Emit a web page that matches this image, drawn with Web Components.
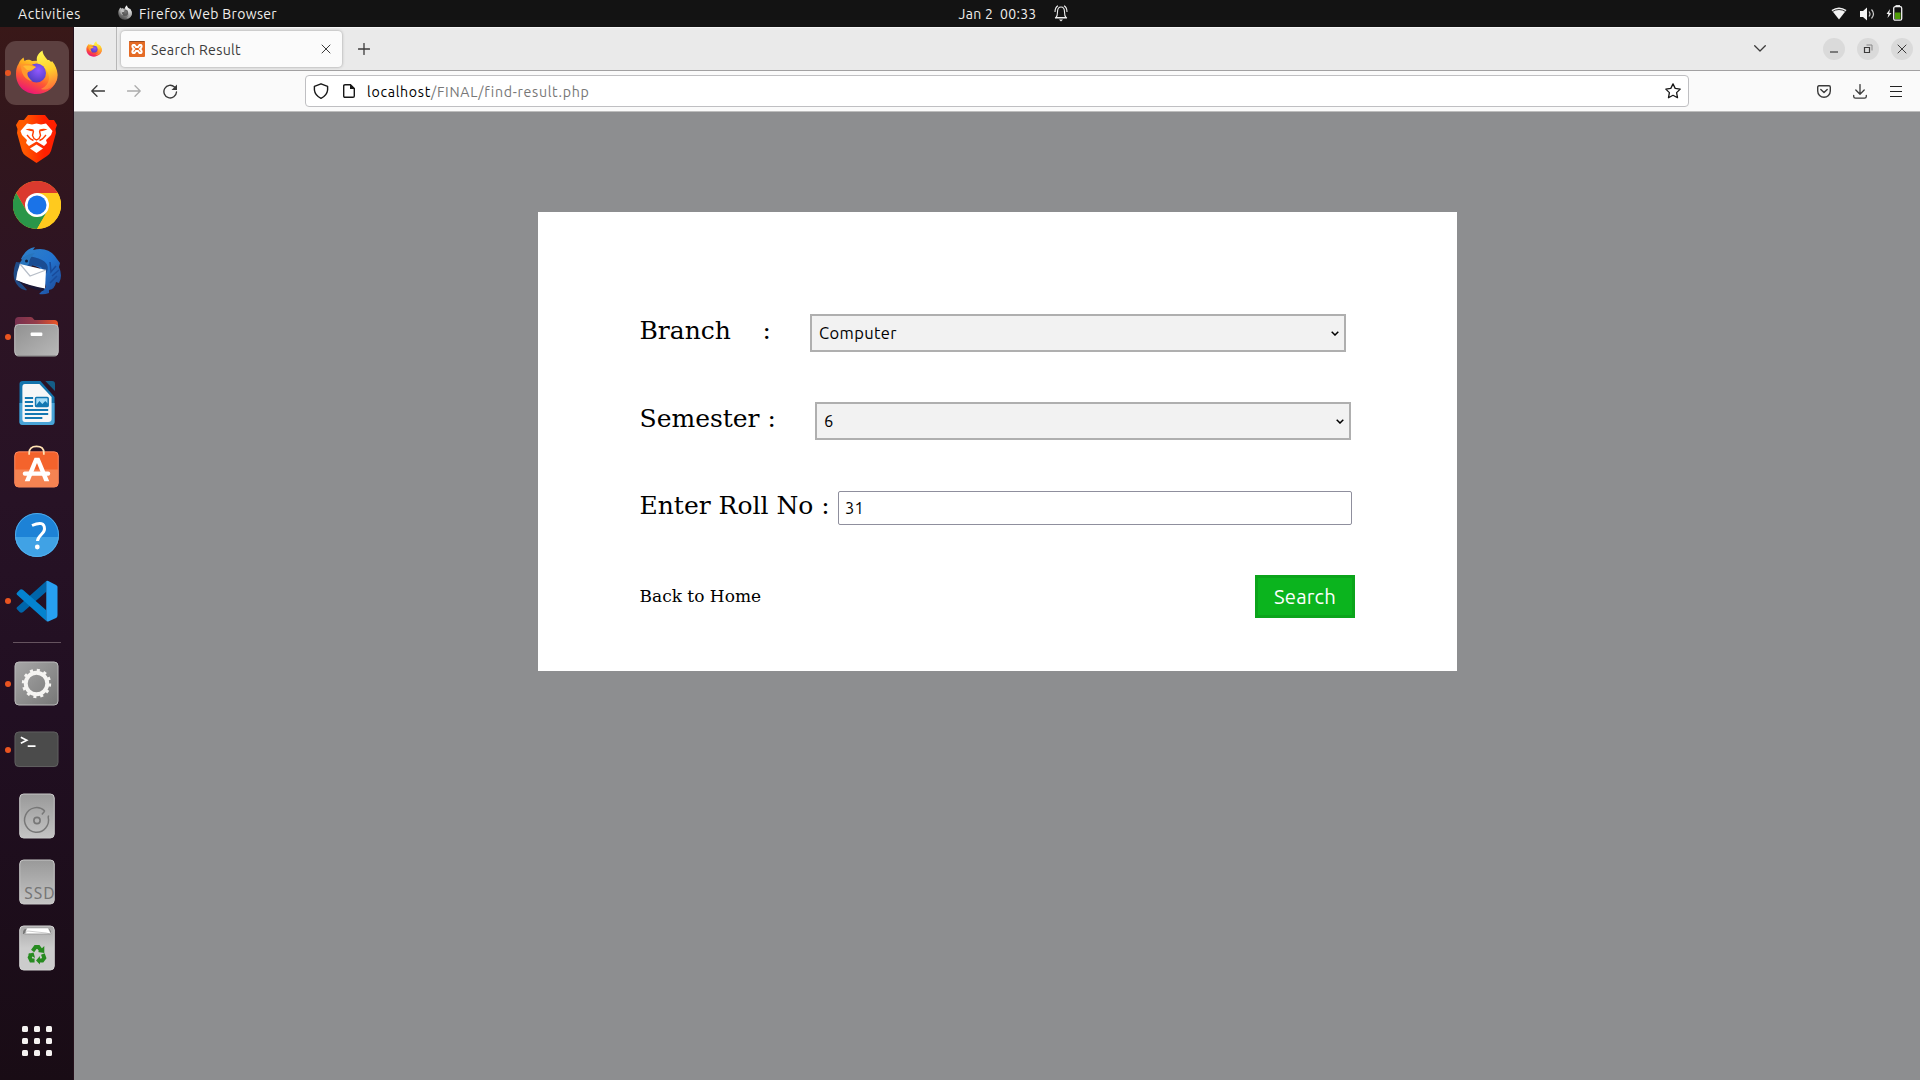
<!DOCTYPE html>
<html lang="en">
<head>
<meta charset="utf-8">
<title>Search Result</title>
<style>
html,body{margin:0;height:100%;overflow:hidden}
body{font-family:Ubuntu,"Noto Sans",sans-serif}
</style>
</head>
<body>
<desktop-shell></desktop-shell>
<script>
const define=(name,html,setup)=>customElements.define(name,class extends HTMLElement{
  connectedCallback(){
    if(this.shadowRoot)return;
    const root=this.attachShadow({mode:'open'});
    root.innerHTML=typeof html==='function'?html(this):html;
    if(setup)setup(this,root);
  }
});

/* A single line of text whose tracking is adjusted to fill the given width. */
define('fit-text','<style>:host{display:block;flex:none;white-space:pre;line-height:20px}span{display:inline-block}</style><span><slot></slot></span>',(el,root)=>{
  const w=+el.getAttribute('width'),s=root.querySelector('span'),n=el.textContent.length;
  el.style.width=w+'px';
  s.style.letterSpacing=((w-s.getBoundingClientRect().width)/n).toFixed(3)+'px';
});

const line='fill="none" stroke="currentColor" stroke-linecap="round" stroke-linejoin="round"';
const fox=`<defs><linearGradient id="b" x1=".8" y1="0" x2=".3" y2="1"><stop offset="0" stop-color="#fff24a"/><stop offset=".35" stop-color="#ffb01f"/><stop offset=".65" stop-color="#ff5634"/><stop offset="1" stop-color="#e8107c"/></linearGradient><linearGradient id="y" x1=".4" y1="0" x2=".6" y2="1"><stop offset="0" stop-color="#fff650"/><stop offset=".5" stop-color="#ffd02c"/><stop offset="1" stop-color="#ff7139"/></linearGradient><radialGradient id="p" cx=".6" cy=".35" r=".7"><stop offset="0" stop-color="#9059ff"/><stop offset="1" stop-color="#4f3bc0"/></radialGradient></defs>
<path fill="url(#b)" d="M3.500 14 C5 10 7 9 8.500 7.500 L9.500 11 C12 9 15 9.500 17 11 L34 10 C41 16 43 22 42 27 C41 37 32 44 21.500 44 C9 44 1 35 1 24 C1 19 2 16 3.500 14Z"/>
<path fill="url(#y)" d="M27.500 0.500 C28 6 32 9 35.500 13 L37 11 C42 17 44 25 41.500 31 C38 38 31 41 26 39 C34 35 36 28 32 21 C30 16 20 16 22 7 C23 4 25 2 27.500 .5Z"/>
<circle cx="21.500" cy="23" r="9.500" fill="url(#p)"/>
<path fill="#ff982d" d="M6 15 C12 13 17 14 21 17 C18 18 20 20 13 22 C11 25 14 28 17 31 C10 30 6 24 6 15Z"/>
<path fill="#ffbc32" d="M8 16 C13 15 17 16 21 17 C18 20 15 20 12 20Z"/>`;

const icons={
fox:['0 0 43 45',fox],
foxgray:['0 0 43 45',`<g style="filter:grayscale(1) brightness(1.05)">${fox}</g>`],
brave:['0 0 41 48',`<defs><linearGradient id="a"><stop offset=".2" stop-color="#ff5a00"/><stop offset=".7" stop-color="#ff2000"/></linearGradient></defs>
<path fill="url(#a)" d="M12 0H29L33 5L38 5L41 10L39.500 14L40 18L35 36Q34 39 31 41L20.500 48L10 41Q7 39 6 36L1 18L1.500 14L0 10L3 5L8 5Z"/>
<path fill="#fff" d="M11 8.500L16 9.500L20.500 8.500L25 9.500L30 8.500L36.500 16L35 20L30 25L31 28L28 31L20.500 26.500L13 31L10 28L11 25L6 20L4.500 16Z"/><path fill="#fff" d="M20.500 29.500L27 33.500L20.500 38L14 33.500Z"/>
<path d="M9.500 14.500Q13 13 17.500 14.500L18 16.500L14.500 16ZM31.500 14.500Q28 13 23.500 14.500L23 16.500L26.500 16Z" fill="#ff3d00"/><path d="M17.500 16L16.500 20.500L18 23.500L20.500 25L23 23.500L24.500 20.500L23.500 16M11 20L14.500 24L17.500 25.500M30 20L26.500 24L23.500 25.500" stroke="#ff3d00" stroke-width="1.400" fill="none"/>`],
chrome:['0 0 48 48',`<circle cx="24" cy="24" r="24" fill="#ffca1e"/><path fill="#db3a2e" d="M3.200 12A24 24 0 0 1 44.800 12H24L13.600 30Z"/><path fill="#2a9649" d="M3.200 12L13.600 30Q18 36 24 36L34.400 30L24 48A24 24 0 0 1 3.200 12Z"/><path fill="#ffca1e" d="M44.800 12A24 24 0 0 1 24 48L34.400 30A12 12 0 0 0 34 17L24 12Z"/><circle cx="24" cy="24" r="12" fill="#fff"/><circle cx="24" cy="24" r="9.500" fill="#1a73e8"/>`],
bird:['0 0 48 48',`<defs><linearGradient id="t" x1="0" x2="1" y2="1"><stop stop-color="#2f80c8"/><stop offset=".5" stop-color="#2374cf"/><stop offset="1" stop-color="#1d4693"/></linearGradient></defs>
<path fill="#204b86" d="M3 15Q-3 31 6 40Q10 44 14 43L8 36L20 17Z"/>
<path fill="url(#t)" d="M8 12Q13 1 22 0L20 3Q36 -1 44 12L47 16L46 20Q50 29 46 36L43 35Q42 42 36 43L36 46Q31 48 26 47L33 40L27 21L12 15Z"/>
<path fill="#1a4c92" d="M10 11Q17 7 29 13Q38 18 33 27L28 20Q15 16 7 21Z"/>
<path fill="#2875bd" d="M6 19Q9 7 22 6Q16 11 16 17L8 24Z"/>
<path fill="#fff" d="M7 17L33 23L32 42Q17 40 3 33Q4 24 7 17Z"/><path fill="none" stroke="#b7bec8" stroke-width="1.200" d="M7 17L17 29L33 23"/><path d="M3 33Q17 39 32 41.500L30 44Q15 42 3 33Z" fill="#1b1735"/><circle cx="13.500" cy="14" r="1.500" fill="#14203d"/>
<path d="M37 15L38 25L43 19M39 29L46 23M37 36L44 29" stroke="#184b9b" stroke-width="1.500" fill="none"/>`],
files:['0 0 46 42',`<defs><linearGradient id="f"><stop stop-color="#77304f"/><stop offset=".5" stop-color="#963c49"/><stop offset="1" stop-color="#ed5626"/></linearGradient><linearGradient id="g" x1="0" x2="1" y2="1"><stop stop-color="#919191"/><stop offset="1" stop-color="#b8b8b8"/></linearGradient></defs><path fill="url(#f)" d="M1 5Q1 1 5 1H17Q19 1 20 3L21 4H41Q45 4 45 8V20H1Z"/><rect x=".75" y="8.750" width="44.500" height="32" rx="4" fill="url(#g)" stroke="#c4c4c4"/><path d="M3 41H43" stroke="#777"/><rect x="17" y="17" width="12" height="3.500" rx="1" fill="#fff"/>`,45,41],
writer:['0 0 37 46',`<path fill="#1474ac" d="M4 1H22L36.500 17V42Q36.500 45 33 45H4Q.5 45 .5 42V4Q.5 1 4 1Z"/><path fill="#49a4d7" d="M.5 23H36.500V42Q36.500 45 33 45H4Q.5 45 .5 42Z"/><path fill="#f7f7f7" d="M6 4H21L33.500 17V39Q33.500 42 30 42H6Q3.500 42 3.500 39V7Q3.500 4 6 4Z"/><path fill="#155e87" d="M27 1H34Q37 1 37 4V11Z"/><path stroke="#1378b2" stroke-width="2" d="M6 18H14.500M6 22H14.500M6 26H14.500M6 30H30M6 34H30M6 38H24"/><rect x="17" y="17.500" width="13" height="9" rx="1" fill="#a7ddf6" stroke="#1378b2" stroke-width="1.500"/><path fill="#1378b2" d="M17 26L21 21L24 24L27 21L30 24V27H17Z"/>`,36],
store:['0 0 46 44',`<rect x=".75" y="7" width="44.500" height="36" rx="4" fill="#f4632c" stroke="#ff8a60"/><path fill="#f58352" d="M1 25H45V39Q45 43 41 43H5Q1 43 1 39Z"/><path d="M15.500 10V8Q15.500 1.500 23 1.500T30.500 8V10" fill="none" stroke="#ffe1b2" stroke-width="1.800"/><path d="M21 13H26L36 37H31L23.500 18.500L16 37H11Z" fill="#fff"/><rect x="9" y="27" width="28" height="4.500" rx="2" fill="#fff"/>`,45,43],
help:['0 0 46 46',`<defs><clipPath id="c"><circle cx="23" cy="23" r="22"/></clipPath></defs><circle cx="23" cy="23" r="22" fill="#1d82d6"/><path clip-path="url(#c)" fill="#40a2e5" d="M0 25H46V46H0Z"/><circle cx="23" cy="23" r="21.500" fill="none" stroke="#5bb4ed" stroke-width=".8"/><path d="M18 13.500Q30.500 8 30.500 17C30.500 22 24 23 23.500 29" fill="none" stroke="#fff" stroke-width="3"/><circle cx="23.300" cy="35" r="2.400" fill="#fff"/>`],
code:['0 0 43 43',`<path d="M31 12V1L1 28Q0 29 1 30L4 33Q5 34 7 33Z" fill="#0065a9"/><path d="M31 31V42L1 15Q0 14 1 13L4 10Q5 9 7 10Z" fill="#0483cf"/><path d="M31 1Q32 .5 33 1L41 5Q42.500 6 42.500 7V36Q42.500 38 41 39L33 42.500Q31 43 31 41Z" fill="#27a0f1"/>`,42,42],
gear:['0 0 46 46',`<defs><linearGradient id="g" x2="1" y2="1"><stop stop-color="#a7a7a7"/><stop offset="1" stop-color="#777"/></linearGradient></defs><rect x="1" y="1" width="44" height="44" rx="4" fill="url(#g)" stroke="#bdbdbd"/><circle cx="23" cy="23" r="11" fill="none" stroke="#f5f4f2" stroke-width="4"/><circle cx="23" cy="23" r="13.500" fill="none" stroke="#f5f4f2" stroke-width="3" stroke-dasharray="3.100 3.960"/>`,45,45],
term:['0 0 46 38',`<rect x="1" y="1" width="44" height="35.500" rx="4" fill="#4b4b4b" stroke="#626262"/><path fill="none" stroke="#fff" stroke-width="1.700" d="M7 6.500L13 9.500L7 12.500M14 15.500H22"/>`,45,37],
disk:['0 0 37 46',`<defs><linearGradient id="g" y2="1" x2="0"><stop stop-color="#999"/><stop offset="1" stop-color="#c4c4c4"/></linearGradient></defs><rect x=".75" y="1" width="35.500" height="44" rx="4" fill="url(#g)" stroke="#c9c9c9"/><path d="M26.500 18A12.300 12.300 0 1 0 30 24L30.500 22.500M26.500 18L23.500 21.500" fill="none" stroke="#777" stroke-width="1.500"/><circle cx="18.500" cy="27.500" r="3.200" fill="none" stroke="#777" stroke-width="1.700"/>`,36],
ssd:['0 0 37 46',`<defs><linearGradient id="g" y2="1" x2="0"><stop stop-color="#999"/><stop offset="1" stop-color="#c4c4c4"/></linearGradient></defs><rect x=".75" y="1" width="35.500" height="44" rx="4" fill="url(#g)" stroke="#c9c9c9"/><text x="5.500" y="40" font-family="Noto Sans" font-size="16" textLength="31" fill="#757575">SSD</text>`,36],
trash:['0 0 37 46',`<defs><linearGradient id="g" y2="1" x2="0"><stop stop-color="#aaa"/><stop offset=".5" stop-color="#ccc"/><stop offset="1" stop-color="#ccc"/></linearGradient></defs><rect x=".75" y="1" width="35.500" height="44" rx="4" fill="url(#g)" stroke="#d3d3d3"/><path d="M4 9Q4 4 7 4H30Q33 4 33 9Z" fill="#777"/><path fill="#fff" stroke="#999" stroke-width=".5" d="M6 9L8 3H30L33 9ZM5 9L9 6L28 8L32 9Z"/><g fill="none" stroke="#278b20" stroke-width="4"><path d="M14 26L17 22H20L23 26"/><path d="M24.500 29L26 33L24 35.500H20"/><path d="M16 35.500H12.500L11 32.500L12.500 29"/></g><path fill="#278b20" d="M19.500 27L26 28L26 21ZM21.500 31V39.500L17.500 35.500ZM9 29L15 27.500L16.500 33Z"/>`,36],
apps:['0 0 30 30',[0,12,24].map(y=>[0,12,24].map(x=>`<rect x="${x}" y="${y}" width="6" height="6" rx="1.500" fill="#f5f2f1"/>`).join('')).join('')],
xampp:['0 0 16 16',`<rect width="16" height="16" rx="1" fill="#e56b25"/><path d="M.5 .5H15.500" stroke="#9d4b1e"/><path d="M5.500 4H4Q2.800 5 4 7L5 8L4 9Q2.800 11 4 12H5.500L7 10H9L10.500 12H12Q13.200 11 12 9L11 8L12 7Q13.200 5 12 4H10.500L9 6H7Z" fill="none" stroke="#fff" stroke-width="2"/>`],
close:['0 0 10 10',`<path ${line} d="M1 1L9 9M9 1L1 9"/>`],
plus:['0 0 12 12',`<path ${line} stroke-width="1.300" d="M6 .5V11.500M.5 6H11.500"/>`],
back:['0 0 14 12',`<path ${line} stroke-width="1.300" d="M6 .8L.8 6L6 11.200M1 6H13.500"/>`],
fwd:['0 0 14 12',`<path ${line} stroke-width="1.300" d="M8 .8L13.200 6L8 11.200M13 6H.5"/>`],
reload:['0 0 15 15',`<path ${line} stroke-width="1.400" d="M13.500 8A6.300 6.300 0 1 1 11.500 3"/><path d="M14 .5V6H8.500Z" fill="currentColor"/>`],
shield:['0 0 16 16',`<path ${line} stroke-width="1.400" d="M8 .8L14.600 3.400V7Q14 12.500 8 15.300Q2 12.500 1.400 7V3.400Z"/>`],
doc:['0 0 12 14',`<path ${line} stroke-width="1.400" d="M2 .8H7.500L11.300 4.500V12Q11.300 13.300 10 13.300H2Q.7 13.300 .7 12V2Q.7 .8 2 .8Z"/><path d="M7 0V5H12Z" fill="currentColor"/>`],
star:['0 0 16 16',`<path ${line} stroke-width="1.300" d="M8 .9L10.200 5.400L15.200 6.100L11.600 9.600L12.500 14.700L8 12.300L3.500 14.700L4.400 9.600L.8 6.100L5.800 5.400Z"/>`],
chev:['0 0 12 7',`<path ${line} stroke-width="1.300" d="M.7 .8L6 6L11.300 .8"/>`],
pocket:['0 0 14 13',`<path ${line} stroke-width="1.400" d="M2 .8H12Q13.300 .8 13.300 2.200V6A6.300 6.300 0 0 1 .7 6V2.200Q.7 .8 2 .8ZM3.800 4.500L7 7.500L10.200 4.500"/>`],
down:['0 0 14 15',`<path ${line} stroke-width="1.300" d="M7 .6V10M2.800 6L7 10.200L11.200 6M.7 11.500V12.500Q.7 14.200 2.500 14.200H11.500Q13.300 14.200 13.300 12.500V11.500"/>`],
menu:['0 0 12 11',`<path stroke="#222" stroke-width="1.200" d="M0 .5H12M0 5.500H12M0 10.500H12"/>`],
min:['0 0 10 10',`<path stroke="currentColor" stroke-width="1.200" d="M1 8H9"/>`],
max:['0 0 10 10',`<path d="M1.500 3.500H6.500V8.500H1.500Z" fill="none" stroke="currentColor" stroke-width="1.200"/><path d="M3.500 1H9V6.500" fill="none" stroke="#888" stroke-width="1"/>`],
bell:['0 0 14 17',`<g fill="none" stroke="#eee" stroke-width="1.100"><path d="M2 12.500Q3.500 11 3.500 7Q3.500 2 7 2T10.500 7Q10.500 11 12 12.500Z"/><path d="M1 7Q1 2.500 4 .8M13 7Q13 2.500 10 .8M1 13H13"/></g><path d="M5 14.500H9L7 16.500Z" fill="#eee"/>`],
wifi:['0 0 16 13',`<path d="M.5 3Q8 -2 15.500 3L8 12.500Z" fill="#f2f2f2"/><path d="M1.500 4.500Q8 .5 14.500 4.500" fill="none" stroke="#333" stroke-width="1"/>`],
vol:['0 0 15 14',`<path d="M0 4H3L7 .5V13.500L3 10H0Z" fill="#f2f2f2"/><path d="M9 4.500Q11 7 9 9.500M11.500 2.500Q15.500 7 11.500 11.500" stroke="#ccc" stroke-width="1.200" fill="none"/>`],
bat:['0 0 17 16',`<path d="M4 4L.5 9H2.500L1.500 13L5.500 8H3.300Z" fill="#f2f2f2"/><rect x="7.700" y="1.700" width="8" height="13.500" rx="1.500" fill="none" stroke="#f2f2f2" stroke-width="1.300"/><path d="M9.500 .8H14" stroke="#f2f2f2" stroke-width="1.400"/><rect x="9" y="7.500" width="5.500" height="6.500" fill="#4e9a06"/>`],
caret:['0 0 8 5',`<path d="M.7 .7L4 4L7.300 .7" fill="none" stroke="#000" stroke-width="1.500"/>`]
};
define('ui-icon',el=>{
  const [box,body,dw,dh]=icons[el.getAttribute('name')],[, ,w,h]=box.split(' ');
  const W=el.getAttribute('w')||dw||w,H=el.getAttribute('h')||dh||h;
  return `<style>:host{display:block;flex:none;width:${W}px;height:${H}px}svg{display:block}</style><svg width="${W}" height="${H}" viewBox="${box}" preserveAspectRatio="none">${body}</svg>`;
});

define('top-bar',`<style>:host{display:flex;align-items:center;height:27px;background:#131313;color:#f0eeec;font-size:14px;padding:0 17px 0 18px}
.side{flex:1 1 0;display:flex;align-items:center}.r{justify-content:flex-end}.mid{display:flex;align-items:center;gap:17px;margin-left:105px}fit-text{padding-top:1px}</style>
<div class="side"><fit-text width="63">Activities</fit-text><ui-icon name="foxgray" w="14" h="15" style="margin:0 7px 2px 37px"></ui-icon><fit-text width="138">Firefox Web Browser</fit-text></div>
<div class="mid"><fit-text width="78">Jan 2  00:33</fit-text><ui-icon name="bell"></ui-icon></div>
<div class="side r"><ui-icon name="wifi"></ui-icon><ui-icon name="vol" style="margin:0 11px 0 13px"></ui-icon><ui-icon name="bat" style="margin-bottom:1px"></ui-icon></div>`);

define('dock-item',el=>`<style>:host{display:flex;align-items:center;height:66px;width:74px}
.dot{width:6px;height:6px;border-radius:50%;margin-left:5px;background:${el.hasAttribute('running')?'#e95420':'transparent'}}
.tile{width:64px;height:64px;margin-left:-6px;border-radius:11px;display:flex;align-items:center;justify-content:center;${el.hasAttribute('active')?'background:#5c4040':''}}
.dot{position:relative;z-index:1}ui-icon{margin-bottom:${el.getAttribute('lift')||0}px;margin-right:${el.hasAttribute('odd')?1:0}px}</style><div class="dot"></div><div class="tile"><ui-icon name="${el.getAttribute('icon')}"></ui-icon></div>`);

define('app-dock',`<style>:host{display:flex;flex-direction:column;width:74px;box-sizing:border-box;padding-top:13px;background:linear-gradient(#391818 0,#32161c 10%,#2d1424 25%,#271225 45%,#210f22 65%,#190c15 100%);box-shadow:inset -1px 0 #24101b}
hr{width:48px;height:1px;border:0;margin:8px 13px;background:#65535f}.apps{margin:auto 22px 24px}</style>
<dock-item icon="fox" running active odd lift="1"></dock-item><dock-item icon="brave" odd></dock-item><dock-item icon="chrome"></dock-item><dock-item icon="bird"></dock-item><dock-item icon="files" running odd lift="1"></dock-item><dock-item icon="writer"></dock-item><dock-item icon="store" odd lift="5"></dock-item><dock-item icon="help"></dock-item><dock-item icon="code" running></dock-item><hr>
<dock-item icon="gear" running odd lift="1"></dock-item><dock-item icon="term" running odd lift="1"></dock-item><dock-item icon="disk"></dock-item><dock-item icon="ssd"></dock-item><dock-item icon="trash"></dock-item><ui-icon class="apps" name="apps"></ui-icon>`);

define('tab-strip',`<style>:host{display:flex;align-items:center;height:43px;background:#eaeaea;border-bottom:1px solid #a2a1a2;color:#3c3b3b;box-shadow:inset 0 1px #f8f8f8}
.pin{width:43px;height:43px;display:flex;align-items:center;padding-left:12px;box-sizing:border-box;border-right:1px solid #b7b7b7;flex:none}
.tab{box-sizing:border-box;width:221px;height:36px;margin-left:4px;border-radius:4px;background:#fbfbfb;box-shadow:0 0 3px #999;display:flex;align-items:center;padding:0 11px 0 8px;font-size:14.200px}
.win{display:flex;gap:12px;margin-right:7px}.win span{width:22px;height:22px;border-radius:50%;background:#dadada;display:grid;place-items:center}</style>
<div class="pin"><ui-icon name="fox" w="16" h="16"></ui-icon></div>
<div class="tab"><ui-icon name="xampp"></ui-icon><fit-text width="90" style="margin:0 auto 0 6px;padding-top:2px">Search Result</fit-text><ui-icon name="close"></ui-icon></div>
<ui-icon name="plus" style="margin:1px auto 0 16px"></ui-icon><ui-icon name="chev" style="margin-right:57px"></ui-icon>
<div class="win"><span><ui-icon name="min"></ui-icon></span><span><ui-icon name="max"></ui-icon></span><span><ui-icon name="close"></ui-icon></span></div>`);

define('nav-bar',`<style>:host{display:flex;align-items:center;height:40px;background:#fafafa;border-bottom:1px solid #bdbdbd;padding:0 18px 0 17px;color:#3a3a3a}
.url{box-sizing:border-box;width:1384px;height:32px;border:1px solid #bfbfc2;border-radius:4px;background:#fff;display:flex;align-items:center;padding:0 7px;margin:0 auto 0 127px;font-size:14.200px;color:#171717}.url fit-text{padding-top:2px}
.nav{display:flex;gap:22px;align-items:center}.tools{display:flex;align-items:center}</style>
<div class="nav"><ui-icon name="back"></ui-icon><ui-icon name="fwd" style="color:#acacac"></ui-icon><ui-icon name="reload"></ui-icon></div>
<div class="url"><ui-icon name="shield"></ui-icon><ui-icon name="doc" style="margin:0 12px 0 14px"></ui-icon><fit-text width="64" style="color:#000">localhost</fit-text><fit-text width="158" style="color:#777">/FINAL/find-result.php</fit-text><ui-icon name="star" style="margin-left:auto"></ui-icon></div>
<div class="tools"><ui-icon name="pocket"></ui-icon><ui-icon name="down" style="margin:0 23px 0 22px"></ui-icon><ui-icon name="menu"></ui-icon></div>`);

define('select-box',`<style>:host{box-sizing:border-box;display:flex;align-items:center;justify-content:space-between;width:536px;height:38px;border:2px solid #afafaf;background:#f2f2f2;padding:0 5px 0 7px;font:16.500px/20px Ubuntu,"Noto Sans",sans-serif;flex:none}::slotted(*){padding-bottom:1px}</style><slot></slot><ui-icon name="caret"></ui-icon>`);
define('text-box',`<style>:host{box-sizing:border-box;display:flex;align-items:center;width:514px;height:34px;border:1px solid #8f8f9d;border-radius:2px;background:#fff;padding:0 6px;font:16.500px/20px Ubuntu,"Noto Sans",sans-serif;flex:none}</style><slot></slot>`);
define('push-button',`<style>:host{box-sizing:border-box;display:flex;align-items:center;justify-content:center;width:100px;height:43px;border:3px solid #0ba41b;background:#0bb41e;color:#fff;font:20.300px Ubuntu,"Noto Sans",sans-serif;flex:none}</style><slot></slot>`);
define('field-row',el=>`<style>:host{display:flex;align-items:center}.l{width:${el.getAttribute('label-width')}px;font:25px/30px "DejaVu Serif",serif;white-space:pre;display:flex;padding-bottom:5px}.l ::slotted(*){flex:none}</style><div class="l"><slot name="label"></slot></div><slot></slot>`);

define('search-form',`<style>:host{box-sizing:border-box;display:flex;flex-direction:column;width:919px;height:459px;margin-left:464px;padding:102px 102px 0 101.500px;background:#fff;color:#000}
field-row{flex:none}.name{width:123px}.roll{height:34px;align-items:flex-start}.foot{display:flex;align-items:center;justify-content:space-between;margin-top:50px}
.home{font:17px/20px "DejaVu Serif",serif;padding-bottom:2px}</style>
<field-row label-width="170.5"><span slot="label" class="name">Branch</span><span slot="label">:</span><select-box><fit-text width="78">Computer</fit-text></select-box></field-row>
<field-row label-width="175.5" style="margin-top:50px"><span slot="label">Semester :</span><select-box><span>6</span></select-box></field-row>
<field-row class="roll" label-width="198.5" style="margin-top:51px"><span slot="label">Enter Roll No :</span><text-box><fit-text width="19">31</fit-text></text-box></field-row>
<div class="foot"><span class="home">Back to Home</span><push-button><fit-text width="62">Search</fit-text></push-button></div>`);

define('browser-window',`<style>:host{display:flex;flex-direction:column;flex:1}main{flex:1;background:#8d8e90;padding-top:100px}</style><tab-strip></tab-strip><nav-bar></nav-bar><main><search-form></search-form></main>`);
define('desktop-shell',`<style>:host{display:flex;flex-direction:column;width:1920px;height:1080px}.body{flex:1;display:flex}</style><top-bar></top-bar><div class="body"><app-dock></app-dock><browser-window></browser-window></div>`);
</script>
</body>
</html>
